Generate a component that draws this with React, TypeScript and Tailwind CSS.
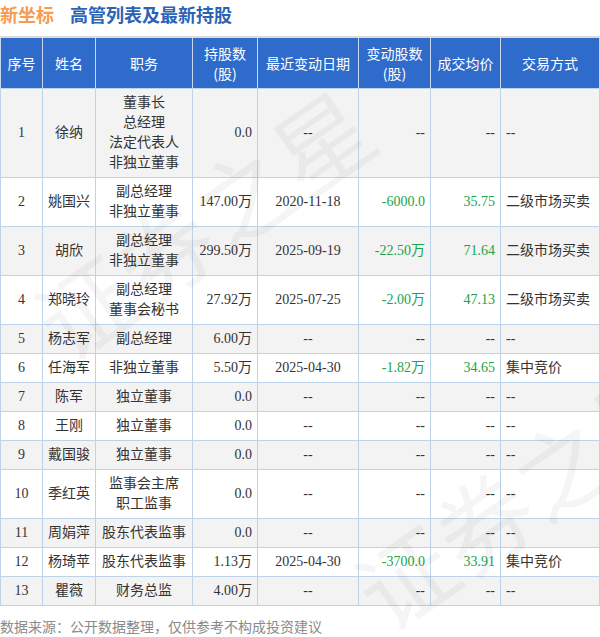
import React from 'react';

type Row = {
  no: number;
  name: string;
  roles: string[];
  shares: string;
  date: string;
  change: string;
  price: string;
  way: string;
};

const rows: Row[] = [
  { no: 1, name: '徐纳', roles: ['董事长', '总经理', '法定代表人', '非独立董事'], shares: '0.0', date: '--', change: '--', price: '--', way: '--' },
  { no: 2, name: '姚国兴', roles: ['副总经理', '非独立董事'], shares: '147.00万', date: '2020-11-18', change: '-6000.0', price: '35.75', way: '二级市场买卖' },
  { no: 3, name: '胡欣', roles: ['副总经理', '非独立董事'], shares: '299.50万', date: '2025-09-19', change: '-22.50万', price: '71.64', way: '二级市场买卖' },
  { no: 4, name: '郑晓玲', roles: ['副总经理', '董事会秘书'], shares: '27.92万', date: '2025-07-25', change: '-2.00万', price: '47.13', way: '二级市场买卖' },
  { no: 5, name: '杨志军', roles: ['副总经理'], shares: '6.00万', date: '--', change: '--', price: '--', way: '--' },
  { no: 6, name: '任海军', roles: ['非独立董事'], shares: '5.50万', date: '2025-04-30', change: '-1.82万', price: '34.65', way: '集中竞价' },
  { no: 7, name: '陈军', roles: ['独立董事'], shares: '0.0', date: '--', change: '--', price: '--', way: '--' },
  { no: 8, name: '王刚', roles: ['独立董事'], shares: '0.0', date: '--', change: '--', price: '--', way: '--' },
  { no: 9, name: '戴国骏', roles: ['独立董事'], shares: '0.0', date: '--', change: '--', price: '--', way: '--' },
  { no: 10, name: '季红英', roles: ['监事会主席', '职工监事'], shares: '0.0', date: '--', change: '--', price: '--', way: '--' },
  { no: 11, name: '周娟萍', roles: ['股东代表监事'], shares: '0.0', date: '--', change: '--', price: '--', way: '--' },
  { no: 12, name: '杨琦苹', roles: ['股东代表监事'], shares: '1.13万', date: '2025-04-30', change: '-3700.0', price: '33.91', way: '集中竞价' },
  { no: 13, name: '瞿薇', roles: ['财务总监'], shares: '4.00万', date: '--', change: '--', price: '--', way: '--' },
];

const td = 'border border-[#bcd3ea] px-[5px] py-1 leading-5 align-middle';
const th = 'border-x border-[#c9d7ee] px-1 py-[5px] leading-5 font-normal align-middle';

export default function App() {
  return (
    <div className="relative w-[600px] h-[637px] bg-white overflow-hidden font-['Liberation_Serif','Noto_Sans_CJK_SC',serif] text-[14px] text-[#333]">
      {/* Title */}
      <div className="h-[28px] mb-[8px] flex items-center gap-[16px] font-['Noto_Sans_CJK_SC',sans-serif] text-[18px] font-bold">
        <span className="text-[#f79b52]">新坐标</span>
        <span className="text-[#2b63b5]">高管列表及最新持股</span>
      </div>

      <div className="border-t-2 border-[#dcdcdc]">
        <table className="w-[599px] table-fixed border-collapse">
          <colgroup>
            <col className="w-[42px]" />
            <col className="w-[53px]" />
            <col className="w-[97px]" />
            <col className="w-[65px]" />
            <col className="w-[101px]" />
            <col className="w-[72px]" />
            <col className="w-[70px]" />
            <col className="w-[99px]" />
          </colgroup>
          <thead>
            <tr className="bg-[#2f6bca] text-white font-['Noto_Sans_CJK_SC',sans-serif]">
              <th className={th}>序号</th>
              <th className={th}>姓名</th>
              <th className={th}>职务</th>
              <th className={th}>持股数<br />(股)</th>
              <th className={th}>最近变动日期</th>
              <th className={th}>变动股数<br />(股)</th>
              <th className={th}>成交均价</th>
              <th className={th}>交易方式</th>
            </tr>
          </thead>
          <tbody>
            {rows.map((r, i) => (
              <tr key={r.no} className={i % 2 === 0 ? 'bg-[#f3f3f3]' : 'bg-white'}>
                <td className={td + ' text-center'}>{r.no}</td>
                <td className={td + ' text-center'}>{r.name}</td>
                <td className={td + ' text-center'}>
                  {r.roles.map((x) => (
                    <div key={x}>{x}</div>
                  ))}
                </td>
                <td className={td + ' text-right'}>{r.shares}</td>
                <td className={td + ' text-center'}>{r.date}</td>
                <td className={td + ' text-right ' + (r.change === '--' ? '' : 'text-[#21a34a]')}>{r.change}</td>
                <td className={td + ' text-right ' + (r.price === '--' ? '' : 'text-[#21a34a]')}>{r.price}</td>
                <td className={td + ' text-left'}>{r.way}</td>
              </tr>
            ))}
          </tbody>
        </table>
      </div>

      <div className="mt-[10px] text-[14px] text-[#8a8a8a] font-['Noto_Sans_CJK_SC',sans-serif] leading-5">
        数据来源：公开数据整理，仅供参考不构成投资建议
      </div>

      {/* watermark */}
      <div className="pointer-events-none absolute left-[10px] top-[150px] -rotate-[35deg] text-[96px] font-['Noto_Sans_CJK_SC',sans-serif] text-black/[0.04] whitespace-nowrap">
        证券之星
      </div>
      <div className="pointer-events-none absolute left-[330px] top-[420px] -rotate-[35deg] text-[96px] font-['Noto_Sans_CJK_SC',sans-serif] text-black/[0.04] whitespace-nowrap">
        证券之星
      </div>
    </div>
  );
}
